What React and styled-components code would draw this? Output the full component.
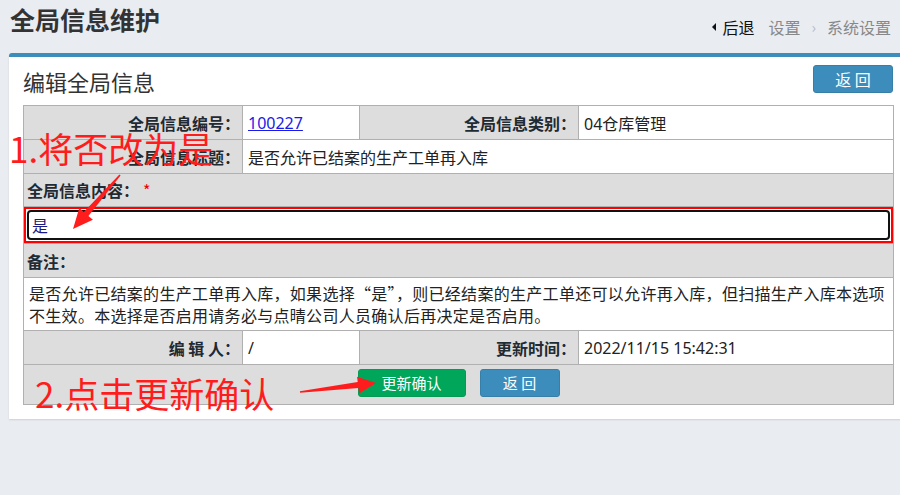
import React from 'react'
import styled, { createGlobalStyle } from 'styled-components'

const GlobalStyle = createGlobalStyle`
    html, body {
        margin: 0;
        padding: 0;
        background: #e9ecf1;
        overflow: hidden;
    }
    body {
        font-family: "Noto Sans", "Noto Sans CJK SC", sans-serif;
        color: #222;
    }
`;

const StyledPage = styled.div`
    position: relative;
    width: 900px;
    height: 495px;
    padding-left: 9px;
    box-sizing: border-box;
`;

const StyledHeader = styled.div`
    display: flex;
    justify-content: space-between;
    align-items: flex-end;
    height: 53px;
    padding-right: 9px;
`;

const StyledPageTitle = styled.h1`
    align-self: flex-start;
    margin: 0;
    padding: 2px 0 0 1px;
    font-size: 25px;
    line-height: 34px;
    font-weight: bold;
    color: #333;
    font-family: "Noto Sans CJK SC", sans-serif;
`;

const StyledCrumbs = styled.div`
    display: flex;
    align-items: center;
    padding-bottom: 15px;
    font-family: "Noto Sans CJK SC", sans-serif;
    font-size: 16px;
    line-height: 22px;
    color: #888;
`;

const StyledBack = styled.span`
    display: flex;
    align-items: center;
    color: #111;
    margin-right: 14px;
    &::before {
        content: "";
        width: 0;
        height: 0;
        border-top: 4px solid transparent;
        border-bottom: 4px solid transparent;
        border-right: 4px solid #111;
        margin-right: 6px;
    }
`;

const StyledCrumbSep = styled.span`
    color: #b4bcc6;
    margin: 0 11px;
    font-size: 15px;
`;

const StyledCard = styled.div`
    width: 898px;
    box-sizing: border-box;
    background: #fff;
    border-top: 4px solid #3c8dbc;
    border-radius: 3px 3px 0 0;
    padding: 0 14px 14px;
    box-shadow: 0 1px 2px rgba(0, 0, 0, 0.12);
`;

const StyledCardHeader = styled.div`
    display: flex;
    justify-content: space-between;
    align-items: center;
    height: 48px;
`;

const StyledCardTitle = styled.h2`
    margin: 0;
    font-size: 22px;
    line-height: 28px;
    font-weight: normal;
    color: #333;
    font-family: "Noto Sans CJK SC", sans-serif;
`;

const StyledButton = styled.button`
    width: ${({ $width }) => $width}px;
    height: 28px;
    padding: 0;
    border: 1px solid ${({ $green }) => ($green ? '#079a55' : '#367fa9')};
    border-radius: 3px;
    background: ${({ $green }) => ($green ? '#00a65a' : '#3c8dbc')};
    color: #fff;
    font-family: "Noto Sans CJK SC", sans-serif;
    font-size: 15px;
    line-height: 26px;
    cursor: pointer;
`;

const StyledTopButton = styled(StyledButton)`
    align-self: flex-start;
    margin-top: 8px;
    font-size: 16px;
`;

const StyledTable = styled.table`
    width: 870px;
    border-collapse: collapse;
    table-layout: fixed;
    font-family: "Noto Sans", "Noto Sans CJK SC", sans-serif;
    font-size: 16px;
`;

const StyledRow = styled.tr`
    height: ${({ $h }) => $h}px;
`;

const StyledLabel = styled.td`
    border: 1px solid #b0b0b0;
    background: #dddddd;
    text-align: right;
    font-weight: bold;
    padding: 0 2px 0 4px;
    color: #1f2a33;
    font-family: "Noto Sans CJK SC", sans-serif;
    white-space: nowrap;
`;

const StyledValue = styled.td`
    border: 1px solid #b0b0b0;
    background: #fff;
    padding: 0 5px;
    color: #222;
`;

const StyledSection = styled.td`
    border: 1px solid #b0b0b0;
    background: #dddddd;
    padding: 0 3px;
    font-weight: bold;
    color: #1f2a33;
    font-family: "Noto Sans CJK SC", sans-serif;
`;

const StyledStar = styled.span`
    color: #e00;
    font-weight: normal;
    margin-left: 4px;
`;

const StyledFieldCell = styled.td`
    border: 1px solid #b0b0b0;
    background: #dddddd;
    padding: 0;
`;

const StyledField = styled.div`
    border: 2px solid #ff0000;
    padding: 1px;
    background: #fff;
`;

const StyledInput = styled.div`
    height: 30px;
    box-sizing: border-box;
    border: 2px solid #111;
    border-radius: 4px;
    padding: 0 3px;
    font-family: "Noto Sans CJK SC", sans-serif;
    font-size: 16px;
    line-height: 26px;
    color: #1a1a80;
`;

const StyledNote = styled.td`
    border: 1px solid #b0b0b0;
    background: #fff;
    padding: 3px 5px 4px;
    line-height: 22px;
    letter-spacing: 0.3px;
    color: #222;
    font-family: "Noto Sans CJK SC", sans-serif;
`;

const StyledLink = styled.a`
    color: #1a1ae6;
    text-decoration: underline;
`;

const StyledActionCell = styled.td`
    border: 1px solid #b0b0b0;
    background: #dddddd;
    padding: 0 0 3px;
`;

const StyledActions = styled.div`
    display: flex;
    justify-content: center;
    gap: 14px;
`;

const StyledCallout = styled.div`
    position: absolute;
    top: ${({ $top }) => $top}px;
    left: ${({ $left }) => $left}px;
    font-family: "Noto Sans CJK SC", sans-serif;
    font-size: 35px;
    line-height: 36px;
    color: #ff1c1c;
    white-space: nowrap;
    pointer-events: none;
`;

const StyledArrows = styled.svg`
    position: absolute;
    top: 0;
    left: 0;
    pointer-events: none;
`;

const App = () => {
    return (
        <StyledPage>
            <GlobalStyle />
            <StyledHeader>
                <StyledPageTitle>全局信息维护</StyledPageTitle>
                <StyledCrumbs>
                    <StyledBack>后退</StyledBack>
                    <span>设置</span>
                    <StyledCrumbSep>›</StyledCrumbSep>
                    <span>系统设置</span>
                </StyledCrumbs>
            </StyledHeader>

            <StyledCard>
                <StyledCardHeader>
                    <StyledCardTitle>编辑全局信息</StyledCardTitle>
                    <StyledTopButton $width={80}>返 回</StyledTopButton>
                </StyledCardHeader>

                <StyledTable>
                    <colgroup>
                        <col style={{ width: 219 }} />
                        <col style={{ width: 117 }} />
                        <col style={{ width: 219 }} />
                        <col style={{ width: 315 }} />
                    </colgroup>
                    <tbody>
                        <StyledRow $h={34}>
                            <StyledLabel>全局信息编号：</StyledLabel>
                            <StyledValue><StyledLink href="#">100227</StyledLink></StyledValue>
                            <StyledLabel>全局信息类别：</StyledLabel>
                            <StyledValue>04仓库管理</StyledValue>
                        </StyledRow>
                        <StyledRow $h={34}>
                            <StyledLabel>全局信息标题：</StyledLabel>
                            <StyledValue colSpan={3}>是否允许已结案的生产工单再入库</StyledValue>
                        </StyledRow>
                        <StyledRow $h={33}>
                            <StyledSection colSpan={4}>
                                全局信息内容：<StyledStar>*</StyledStar>
                            </StyledSection>
                        </StyledRow>
                        <StyledRow $h={36}>
                            <StyledFieldCell colSpan={4}>
                                <StyledField>
                                    <StyledInput>是</StyledInput>
                                </StyledField>
                            </StyledFieldCell>
                        </StyledRow>
                        <StyledRow $h={34}>
                            <StyledSection colSpan={4}>备注：</StyledSection>
                        </StyledRow>
                        <StyledRow $h={53}>
                            <StyledNote colSpan={4}>
                                是否允许已结案的生产工单再入库，如果选择“是”，则已经结案的生产工单还可以允许再入库，但扫描生产入库本选项不生效。本选择是否启用请务必与点晴公司人员确认后再决定是否启用。
                            </StyledNote>
                        </StyledRow>
                        <StyledRow $h={34}>
                            <StyledLabel>编 辑 人：</StyledLabel>
                            <StyledValue>/</StyledValue>
                            <StyledLabel>更新时间：</StyledLabel>
                            <StyledValue>2022/11/15 15:42:31</StyledValue>
                        </StyledRow>
                        <StyledRow $h={40}>
                            <StyledActionCell colSpan={4}>
                                <StyledActions>
                                    <StyledButton $green $width={108}>更新确认</StyledButton>
                                    <StyledButton $width={80}>返 回</StyledButton>
                                </StyledActions>
                            </StyledActionCell>
                        </StyledRow>
                    </tbody>
                </StyledTable>
            </StyledCard>

            <StyledCallout $top={130} $left={9}>1.将否改为是</StyledCallout>
            <StyledCallout $top={375} $left={35}>2.点击更新确认</StyledCallout>
            <StyledArrows width="900" height="495" viewBox="0 0 900 495">
                <polygon fill="#ff1c1c" points="120.6,175.5 88.4,215.9 92.9,219.8 73,229 79.3,208 83.8,211.9 119.4,174.5" />
                <polygon fill="#ff1c1c" points="300.1,392.8 358.5,388.1 359.1,393.5 376,383 357.1,376.7 357.7,382.1 299.9,391.2" />
            </StyledArrows>
        </StyledPage>
    )
}

export default App;
